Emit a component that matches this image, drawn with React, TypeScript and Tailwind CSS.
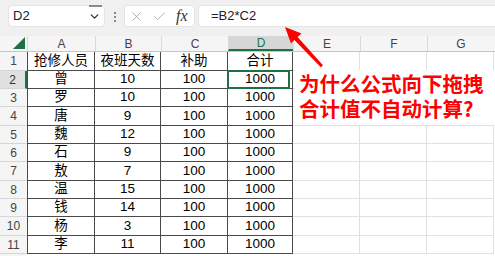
import { Check, ChevronDown, X } from 'lucide-react';

const columns = [
  { name: 'A', width: 'w-[68px]' },
  { name: 'B', width: 'w-[66px]' },
  { name: 'C', width: 'w-[67px]' },
  { name: 'D', width: 'w-[65px]' },
  { name: 'E', width: 'w-[67px]' },
  { name: 'F', width: 'w-[67px]' },
  { name: 'G', width: 'w-[67px]' },
];

const rows = [
  ['抢修人员', '夜班天数', '补助', '合计'],
  ['曾', '10', '100', '1000'],
  ['罗', '10', '100', '1000'],
  ['唐', '9', '100', '1000'],
  ['魏', '12', '100', '1000'],
  ['石', '9', '100', '1000'],
  ['敖', '7', '100', '1000'],
  ['温', '15', '100', '1000'],
  ['钱', '14', '100', '1000'],
  ['杨', '3', '100', '1000'],
  ['李', '11', '100', '1000'],
];

const FONT = "font-['Liberation_Sans','Noto_Sans_CJK_SC',sans-serif]";

const App = () => {
  return (
    <div className={`relative h-[256px] w-[495px] overflow-hidden bg-white ${FONT}`}>
      {/* 编辑栏 */}
      <div className="flex h-[36px] items-start bg-[#f0f0f0] pt-[5px]">
        <div className="relative ml-[8px] flex h-[22px] w-[97px] items-center justify-between rounded-[4px] border border-[#e3e3e3] bg-white pl-[4px] pr-[3px]">
          <span className="text-[13px] text-[#222]">D2</span>
          <ChevronDown size={13} strokeWidth={2.5} className="text-[#333]" />
          <div className="absolute right-[2px] top-[-1px] h-[2px] w-[13px] bg-[#8a8a8a]" />
        </div>
        <div className="ml-[8px] mt-[7px] flex w-[3px] flex-col items-center gap-[2px]">
          <span className="h-[2px] w-[2px] bg-[#8a8a8a]" />
          <span className="h-[2px] w-[2px] bg-[#8a8a8a]" />
          <span className="h-[2px] w-[2px] bg-[#8a8a8a]" />
        </div>
        <div className="ml-[8px] flex h-[22px] w-[71px] items-center rounded-[4px] border border-[#e3e3e3] bg-white pl-[4px]">
          <X size={15} strokeWidth={1.2} className="text-[#9a9a9a]" />
          <Check size={15} strokeWidth={1.2} className="ml-[8px] text-[#9a9a9a]" />
          <span className="ml-[9px] font-['Liberation_Serif',serif] text-[16px] italic leading-none text-[#333]">
            fx
          </span>
        </div>
        <div className="ml-[3px] flex h-[22px] flex-1 items-center rounded-l-[4px] border border-r-0 border-[#e3e3e3] bg-white pl-[12px]">
          <span className="text-[13px] text-[#222]">=B2*C2</span>
        </div>
      </div>

      {/* 列标题 */}
      <div className="flex h-[16px] border-b border-[#c6c6c6] bg-[#f5f5f5]">
        <div className="flex w-[27px] items-end justify-end pb-[2px] pr-[2px]">
          <svg width="12" height="12" viewBox="0 0 12 12">
            <polygon points="12,0 12,12 0,12" fill="#1e7145" />
          </svg>
        </div>
        {columns.map((col) => (
          <div
            key={col.name}
            className={`${col.width} flex items-center justify-center border-l border-[#dadada] text-[12px] ${
              col.name === 'D'
                ? 'border-b-2 border-b-[#1e7145] bg-[#d6d6d6] text-[#1e7145]'
                : 'text-[#444]'
            }`}
          >
            {col.name}
          </div>
        ))}
      </div>

      {/* 表格行 */}
      {rows.map((row, i) => (
        <div
          key={i}
          className={`flex ${i % 3 === 0 ? 'h-[19px]' : 'h-[18px]'}`}
        >
          <div
            className={`flex w-[27px] items-center justify-center border-b border-[#d6d6d6] text-[12px] ${
              i === 1 ? 'border-r-2 border-r-[#1e7145] bg-[#e0e0e0] text-[#333]' : 'bg-[#f5f5f5] text-[#444]'
            }`}
          >
            {i + 1}
          </div>
          {columns.map((col, j) => {
            const inTable = j < 4;
            return (
              <div
                key={col.name}
                className={`${col.width} relative flex items-center justify-center text-[13.5px] text-black ${
                  inTable
                    ? `border-b border-r border-[#4a4a4a] ${j === 0 ? 'border-l' : ''}`
                    : 'border-b border-r border-[#e1e1e1]'
                }`}
              >
                {inTable ? row[j] : ''}
                {i === 1 && j === 3 && (
                  <div className="absolute inset-[-1px] right-[2px] border-2 border-[#1e7145]" />
                )}
              </div>
            );
          })}
        </div>
      ))}
      <div className="flex h-[4px]">
        <div className="w-[27px] bg-[#f5f5f5]" />
      </div>

      {/* 红色箭头 */}
      <svg className="absolute left-0 top-0" width="495" height="256">
        <polygon
          points="285,27 301.5,33.5 297.6,37 323,65.2 320.8,67.2 294.4,40 291,43.6"
          fill="#ff0000"
        />
      </svg>

      {/* 批注文字 */}
      <div className="absolute left-[295px] top-[70px] flex h-[55px] w-[200px] flex-col bg-white pl-[4px] pt-[1px] font-['Noto_Sans_CJK_SC',sans-serif] text-[20.5px] font-bold leading-[25px] text-[#ff0000]">
        <span>为什么公式向下拖拽</span>
        <span>合计值不自动计算?</span>
      </div>
    </div>
  );
};

export default App;
